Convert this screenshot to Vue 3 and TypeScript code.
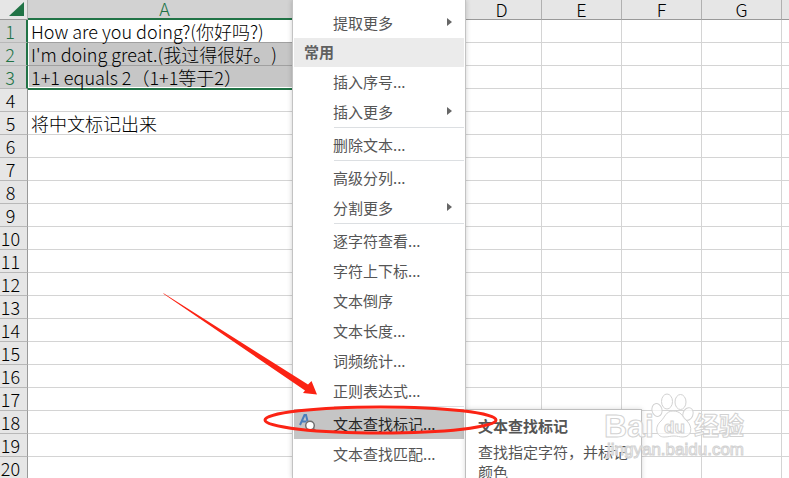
<script setup lang="ts">
interface MenuEntry {
  kind: 'item' | 'heading' | 'separator'
  label?: string
  submenu?: boolean
  active?: boolean
}

const columns: string[] = ['A', 'B', 'C', 'D', 'E', 'F', 'G', 'H']
const rowCount = 20
const columnA: Record<number, string> = {
  1: 'How are you doing?(你好吗?)',
  2: "I'm doing great.(我过得很好。)",
  3: '1+1 equals 2（1+1等于2）',
  5: '将中文标记出来',
}

const isSelected = (row: number): boolean => row <= 3

const menu: MenuEntry[] = [
  { kind: 'item', label: '提取更多', submenu: true },
  { kind: 'heading', label: '常用' },
  { kind: 'item', label: '插入序号...' },
  { kind: 'item', label: '插入更多', submenu: true },
  { kind: 'separator' },
  { kind: 'item', label: '删除文本...' },
  { kind: 'separator' },
  { kind: 'item', label: '高级分列...' },
  { kind: 'item', label: '分割更多', submenu: true },
  { kind: 'separator' },
  { kind: 'item', label: '逐字符查看...' },
  { kind: 'item', label: '字符上下标...' },
  { kind: 'item', label: '文本倒序' },
  { kind: 'item', label: '文本长度...' },
  { kind: 'item', label: '词频统计...' },
  { kind: 'item', label: '正则表达式...' },
  { kind: 'separator' },
  { kind: 'item', label: '文本查找标记...', active: true },
  { kind: 'item', label: '文本查找匹配...' },
]
</script>

<template>
  <main class="workbook">
    <table class="sheet">
      <colgroup>
        <col class="col-index" />
        <col class="col-wide" />
        <col v-for="c in columns.slice(1)" :key="c" class="col-normal" />
      </colgroup>
      <thead>
        <tr>
          <th class="corner">
            <svg viewBox="0 0 27 17" width="27" height="17" aria-hidden="true">
              <path d="M24 2V16H9Z" fill="#217346" />
            </svg>
          </th>
          <th v-for="c in columns" :key="c" scope="col" :class="{ picked: c === 'A' }">{{ c }}</th>
        </tr>
      </thead>
      <tbody>
        <tr v-for="r in rowCount" :key="r">
          <th scope="row" :class="{ picked: isSelected(r) }">{{ r }}</th>
          <td
            v-for="c in columns"
            :key="c"
            :class="{
              filled: c === 'A' && isSelected(r) && r > 1,
              first: c === 'A' && r === 1,
              last: c === 'A' && r === 3,
            }"
          >{{ c === 'A' ? columnA[r] : '' }}</td>
        </tr>
      </tbody>
    </table>

    <div class="menu" role="menu">
      <template v-for="(entry, i) in menu" :key="i">
        <div v-if="entry.kind === 'separator'" class="separator" role="separator"></div>
        <div v-else-if="entry.kind === 'heading'" class="heading">{{ entry.label }}</div>
        <button v-else type="button" role="menuitem" class="item" :class="{ active: entry.active }">
          <span class="icon">
            <svg v-if="entry.active" viewBox="0 0 18 20" width="18" height="20" aria-hidden="true">
              <path d="M1 12 5.5 2H7L8.5 8M3 8.5H7.5" fill="none" stroke="#4a7ebb" stroke-width="2" />
              <circle cx="11" cy="12.5" r="4.3" fill="#fff" stroke="#707070" stroke-width="1.5" />
              <path d="M14 15.5 16.5 18" stroke="#707070" stroke-width="2" />
            </svg>
          </span>
          <span class="label">{{ entry.label }}</span>
          <svg v-if="entry.submenu" class="caret" viewBox="0 0 5 8" width="5" height="8" aria-hidden="true">
            <path d="M0 0 5 4 0 8Z" fill="#666" />
          </svg>
        </button>
      </template>
    </div>

    <aside class="tooltip" role="tooltip">
      <strong>文本查找标记</strong>
      <p>查找指定字符，并标记颜色</p>
    </aside>

    <svg class="watermark" viewBox="0 0 150 70" width="150" height="70">
      <g class="outline">
        <text x="4" y="47" class="brand">Bai</text>
        <ellipse cx="57" cy="20" rx="5" ry="6.5" transform="rotate(-15 57 20)" />
        <ellipse cx="67" cy="11.5" rx="5.5" ry="7.5" />
        <ellipse cx="80.5" cy="12" rx="5.5" ry="7.5" />
        <ellipse cx="88" cy="24" rx="5" ry="6.5" transform="rotate(20 88 24)" />
        <path d="M73 21C66 21 65 27 61 31C54 37 56 47 64 47C69 47 70 46 74 46C78 46 79 47 83 47C92 47 93 37 87 31C82 26 81 21 73 21Z" />
        <text x="64" y="43" class="du">du</text>
        <text x="94" y="45" class="cn">经验</text>
      </g>
      <text x="7" y="65" class="url">jingyan.baidu.com</text>
    </svg>

    <svg class="markup" viewBox="0 0 240 150" width="240" height="150" aria-hidden="true">
      <path d="M3 3.5 4 3.5 148 94.500 151.500 91 157 104.500 143 103 145 100.500Z" fill="#fb2314" />
      <ellipse cx="220.5" cy="130" rx="115.500" ry="13" fill="none" stroke="#fb2314" stroke-width="3" />
    </svg>
  </main>
</template>

<style>
body {
  margin: 0;
  background: #fff;
}
</style>

<style scoped>
.workbook {
  position: relative;
  height: 100vh;
  overflow: hidden;
  background: #fff;
  font-family: "Noto Sans CJK SC", "Noto Sans", sans-serif;
}

.sheet {
  width: 862px;
  table-layout: fixed;
  border-collapse: separate;
  border-spacing: 0;
  color: #000;
  font-size: 18px;
  font-weight: 300;
  line-height: 20px;
  text-spacing-trim: space-all;
}

.col-index { width: 28px; }
.col-wide { width: 274px; }
.col-normal { width: 80px; }

th,
td {
  box-sizing: border-box;
  height: 23px;
  padding: 0;
  border-right: 1px solid #d4d4d4;
  border-bottom: 1px solid #d4d4d4;
  white-space: nowrap;
}

td { padding-left: 3px; }

th {
  background: #e6e6e6;
  font-weight: 300;
  text-align: center;
}

thead th {
  height: 20px;
  padding-bottom: 2px;
  border-right-color: #b0b0b0;
  border-bottom-color: #999;
  line-height: 16px;
}

tbody th {
  padding-right: 6px;
  border-right-color: #999;
  border-bottom-color: #b8b8b8;
}

.corner svg { display: block; }

th.picked {
  background: #d2d2d2;
  color: #217346;
}

thead th.picked { border-bottom: 2px solid #217346; }
tbody th.picked { border-right: 2px solid #217346; }
td.first { border-bottom-color: #a0a0a0; }
td.filled {
  border-bottom-color: #a0a0a0;
  background: #c6c6c6;
  box-shadow: inset 1px 0 #fff;
}
td.last {
  border-bottom-color: #217346;
  box-shadow: 0 1px #217346, inset 1px -1px #fff;
}

.menu {
  position: absolute;
  top: 0;
  bottom: 0;
  left: 292px;
  box-sizing: border-box;
  width: 174px;
  padding: 8px 1px 0;
  border: solid #c3c3c3;
  border-width: 0 1px;
  background: #fff;
  box-shadow: 0 0 5px rgba(0, 0, 0, 0.2);
  color: #555;
  font-size: 15px;
}

.item {
  display: flex;
  align-items: center;
  width: 100%;
  height: 30px;
  padding: 0 12px 2px 0;
  border: 0;
  background: transparent;
  color: inherit;
  font: inherit;
  text-align: left;
}

.item.active {
  background: #c5c5c5;
  color: #262626;
}

.icon {
  display: flex;
  width: 34px;
  padding-left: 5px;
}

.label { flex: 1; }

.heading {
  height: 29px;
  padding-left: 10px;
  background: #ebebeb;
  color: #606060;
  font-weight: 700;
  line-height: 28px;
}

.separator {
  height: 2px;
  margin-left: 40px;
  border-top: 1px solid #dcdfe2;
}

.tooltip {
  position: absolute;
  top: 409px;
  left: 465px;
  box-sizing: border-box;
  width: 177px;
  padding: 6px 12px;
  border: 1px solid #bebebe;
  background: #fff;
  box-shadow: 0 0 5px rgba(0, 0, 0, 0.15);
  color: #555;
  font-size: 15px;
  line-height: 20px;
}

.tooltip p { margin: 6px 0 0; }

.watermark {
  position: absolute;
  top: 390px;
  left: 600px;
  overflow: visible;
}

.outline {
  fill: rgba(255, 255, 255, 0.7);
  stroke: #d2d2d2;
  stroke-width: 1;
}

.brand {
  font: 700 32px "Liberation Sans", sans-serif;
}

.du {
  font: 700 17px "Liberation Sans", sans-serif;
}

.cn {
  font: 700 25px "Noto Sans CJK SC", sans-serif;
}

.url {
  fill: rgba(255, 255, 255, 0.7);
  stroke: #d2d2d2;
  stroke-width: 1;
  font: 400 17px "Liberation Sans", sans-serif;
}

.markup {
  position: absolute;
  top: 290px;
  left: 160px;
  overflow: visible;
  pointer-events: none;
}
</style>
